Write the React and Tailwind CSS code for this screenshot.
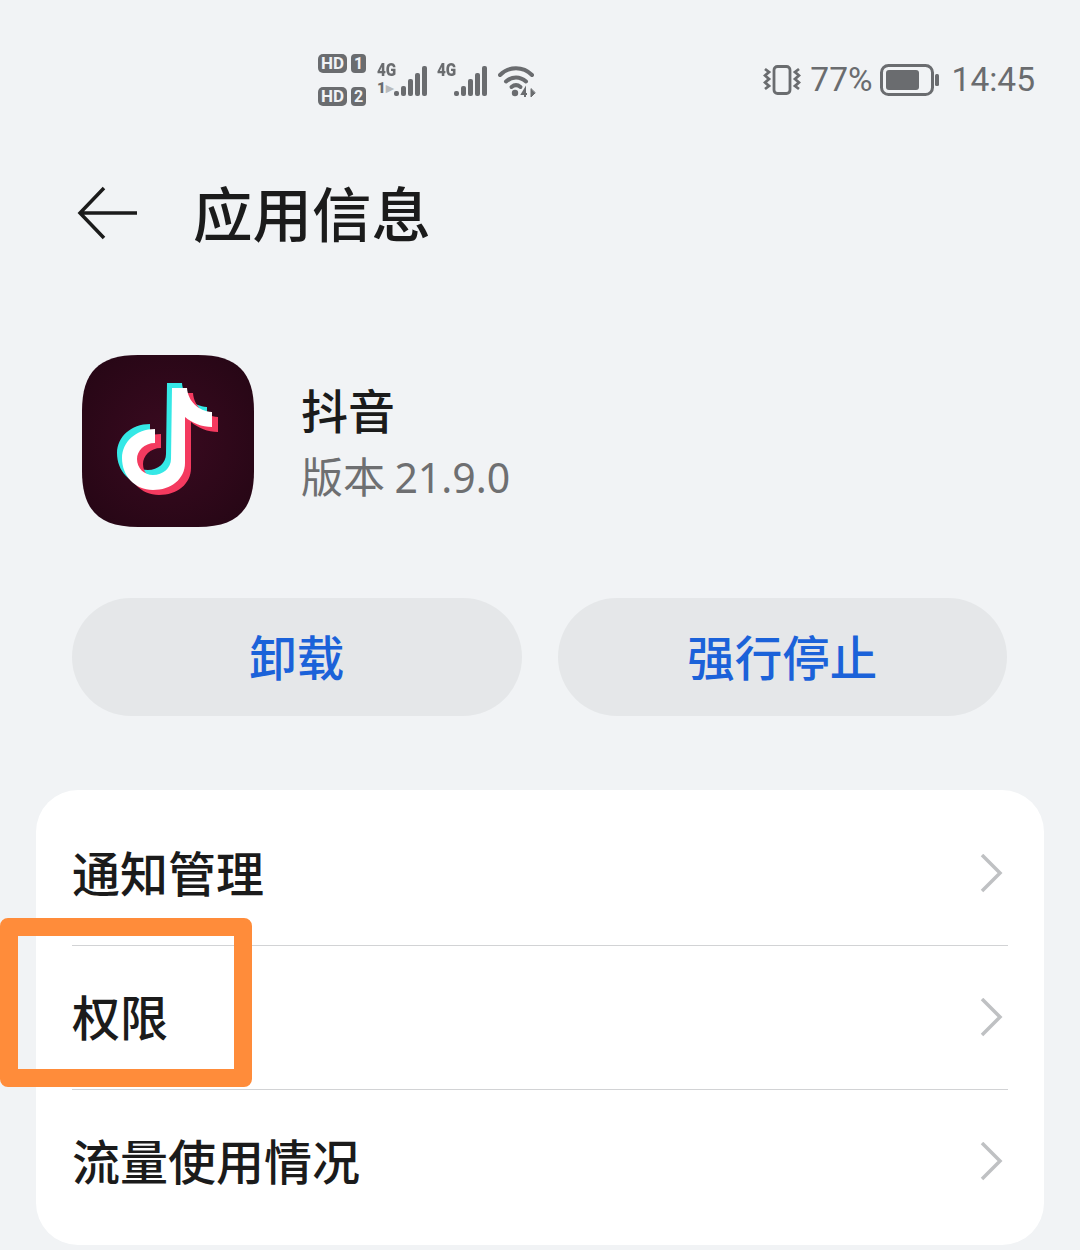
const FONT = "font-['Noto_Sans_CJK_SC','Noto_Sans',sans-serif]"

function HdBadge({ n }) {
  return (
    <div className="flex items-center gap-[4px] h-[19px]">
      <span className="w-[29px] h-[19px] rounded-[5px] bg-[#6a6c6f] text-[#f1f3f5] text-[17px] leading-[19px] font-bold text-center font-['Roboto',sans-serif]">HD</span>
      <span className="w-[15px] h-[19px] rounded-[4px] bg-[#6a6c6f] text-[#f1f3f5] text-[16px] leading-[19px] font-bold text-center font-['Roboto',sans-serif]">{n}</span>
    </div>
  )
}

function Signal({ label, sub }) {
  const bars = [5, 10, 17, 23, 30]
  return (
    <div className="relative w-[50px] h-[32px]">
      <span className="absolute left-0 top-[-4px] text-[#6a6c6f] text-[18px] leading-[18px] font-black font-['Roboto',sans-serif] scale-x-[0.85] origin-left">{label}</span>
      {sub && <span className="absolute left-0 top-[16px] text-[#6a6c6f] text-[15px] leading-[15px] font-black font-['Roboto',sans-serif]">1<span className="text-[#b9bbbd]">▸</span></span>}
      <svg className="absolute right-0 top-0" width="33" height="32" viewBox="0 0 33 32">
        {bars.map((h, i) => (
          <rect key={i} x={i * 7} y={31 - h} width="5" height={h} rx="2" fill="#6a6c6f" />
        ))}
      </svg>
    </div>
  )
}

function Wifi() {
  return (
    <svg className="ml-[1px]" width="38" height="34" viewBox="0 0 38 34" fill="none" stroke="#6a6c6f" strokeWidth="4" strokeLinecap="round">
      <path d="M2 11C11 2 25 2 34 11" />
      <path d="M8 17.500C14 12 22 12 28 17.500" />
      <path d="M13.500 23C16.500 20.500 19.500 20.500 22.500 23" />
      <circle cx="17" cy="29" r="3.200" fill="#6a6c6f" stroke="none" />
      <path d="M27 33v-8l-3 5h5" strokeWidth="2" strokeLinecap="butt" />
      <path d="M33 25v8l4-4z" fill="#6a6c6f" strokeWidth="1" />
    </svg>
  )
}

function Vibrate() {
  return (
    <svg width="38" height="30" viewBox="0 0 38 30" fill="none" stroke="#6a6c6f">
      <rect x="11" y="1.500" width="16" height="27" rx="3.500" strokeWidth="2.800" />
      <path d="M2 4l4 3-4 3.500 4 3.500-4 3.500 4 3.500-4 3" strokeWidth="2.800" />
      <path d="M36 4l-4 3 4 3.500-4 3.500 4 3.500-4 3.500 4 3" strokeWidth="2.800" />
    </svg>
  )
}

function Battery() {
  return (
    <svg width="60" height="32" viewBox="0 0 60 32" fill="none">
      <rect x="1.500" y="1.500" width="51" height="29" rx="7" stroke="#6a6c6f" strokeWidth="3" />
      <rect x="6" y="6" width="33" height="20" rx="3" fill="#6a6c6f" />
      <rect x="55" y="10" width="4" height="12" rx="1.500" fill="#6a6c6f" />
    </svg>
  )
}

const NOTE = 'M90 33H105C106 46 116 56 130 57V72C120 72 110 68 103 62V108C103 124 89 135 71 135C53 135 40 121 40 103C40 87 54 74 73 74V88C62 88 55 96 55 104C55 113 62 120 71 120C81 120 89 113 89 104Z'

function AppIcon() {
  return (
    <svg width="172" height="172" viewBox="0 0 172 172">
      <defs>
        <radialGradient id="iconBg" cx="50%" cy="50%" r="70%">
          <stop offset="0%" stopColor="#3a0a20" />
          <stop offset="100%" stopColor="#240614" />
        </radialGradient>
      </defs>
      <path d="M56 0h60c39 0 56 17 56 56v60c0 39-17 56-56 56H56c-39 0-56-17-56-56V56C0 17 17 0 56 0z" fill="url(#iconBg)" />
      <g className="blur-[0.6px]">
        <path d={NOTE} fill="#35e8e6" transform="translate(-5 -5)" />
        <path d={NOTE} fill="#f43a5f" transform="translate(6 5)" />
        <path d={NOTE} fill="#ffffff" />
      </g>
    </svg>
  )
}

function Row({ label, divider }) {
  return (
    <div className={`h-[144px] flex items-center justify-between pr-[5px] mx-[36px] ${divider ? 'border-b border-[#d2d3d5]' : ''}`}>
      <span className="pb-[6px] text-[48px] leading-none font-medium text-[#1b1b1b]">{label}</span>
      <svg width="24" height="40" viewBox="0 0 24 40" fill="none" stroke="#bfc1c3" strokeWidth="3.500">
        <path d="M3 1l18 18L3 37" />
      </svg>
    </div>
  )
}

export default function App() {
  return (
    <div className={`relative w-[1080px] h-[1250px] overflow-hidden bg-[#f1f3f5] ${FONT}`}>
      {/* status bar */}
      <div className="h-[60px] mt-[50px] flex items-center justify-between pl-[318px] pr-[45px] absolute top-0 inset-x-0">
        <div className="flex items-center">
          <div className="flex flex-col gap-[14px]">
            <HdBadge n="1" />
            <HdBadge n="2" />
          </div>
          <div className="flex items-center gap-[10px] ml-[11px] mt-[2px]">
            <Signal label="4G" sub />
            <Signal label="4G" />
            <Wifi />
          </div>
        </div>
        <div className="flex items-center text-[#6a6c6f] text-[33.5px] font-['Roboto',sans-serif]">
          <Vibrate />
          <span className="ml-[9px]">77%</span>
          <span className="ml-[7px]"><Battery /></span>
          <span className="ml-[12px]">14:45</span>
        </div>
      </div>

      <div className="pt-[110px]">
        {/* header */}
        <div className="h-[210px] flex items-center pl-[77px] pb-[6px]">
          <svg className="mt-[2px]" width="62" height="54" viewBox="0 0 62 54" fill="none" stroke="#1b1b1b" strokeWidth="3.500">
            <path d="M60 27H3M27 2L3 27l24 25" />
          </svg>
          <h1 className="ml-[54px] text-[59.5px] leading-none font-medium text-[#1b1b1b]">应用信息</h1>
        </div>

        {/* app info */}
        <div className="h-[172px] mt-[35px] flex items-center pl-[82px]">
          <AppIcon />
          <div className="ml-[47px]">
            <div className="text-[47px] leading-[60px] font-medium text-[#1b1b1b]">抖音</div>
            <div className="mt-[10px] text-[42px] leading-[52px] text-[#6e6f71]">
              版本 <span className="text-[41px] font-['Noto_Sans',sans-serif]">21.9.0</span>
            </div>
          </div>
        </div>

        {/* action buttons */}
        <div className="mt-[71px] flex gap-[36px] pl-[72px] pr-[73px]">
          <button className="flex-1 h-[118px] pb-[2px] rounded-full bg-[#e5e7e9] text-[47.5px] font-medium text-[#1b62d9]">卸载</button>
          <button className="flex-1 h-[118px] pb-[2px] rounded-full bg-[#e5e7e9] text-[47.5px] font-medium text-[#1b62d9]">强行停止</button>
        </div>

        {/* menu card */}
        <div className="mt-[74px] mx-[36px] h-[455px] pt-[12px] rounded-[42px] bg-white">
          <Row label="通知管理" divider />
          <Row label="权限" divider />
          <Row label="流量使用情况" />
        </div>
      </div>

      {/* orange highlight */}
      <div className="absolute left-0 top-[918px] w-[252px] h-[169px] border-[18px] border-[#ff8c3a] rounded-[8px]" />
    </div>
  )
}
